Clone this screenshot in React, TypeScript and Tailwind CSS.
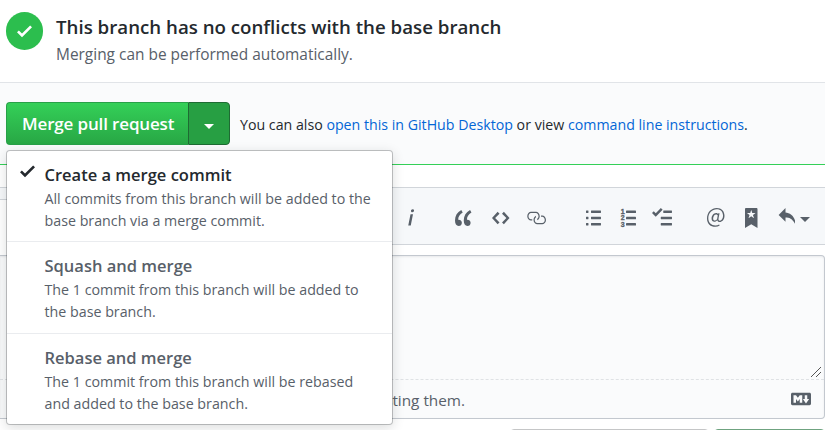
import React from "react";

const paths = {
  check: "M12 5l-8 8-4-4 1.5-1.5L4 10l6.5-6.5L12 5z",
  italic:
    "M2.81 5h1.98L3 14H1l1.81-9zm.36-2.7c0-.7.58-1.3 1.33-1.3.56 0 1.13.38 1.13 1.03 0 .75-.59 1.3-1.33 1.3-.58 0-1.13-.38-1.13-1.03z",
  quote:
    "M6.16 3.5C3.73 5.06 2.55 6.67 2.55 9.36c.16-.05.3-.05.44-.05 1.27 0 2.5.86 2.5 2.41 0 1.61-1.03 2.61-2.5 2.61-1.9 0-2.99-1.52-2.99-4.25 0-3.8 1.75-6.53 5.02-8.42L6.16 3.5zm7 0c-2.43 1.56-3.61 3.17-3.61 5.86.16-.05.3-.05.44-.05 1.27 0 2.5.86 2.5 2.41 0 1.61-1.03 2.61-2.5 2.61-1.89 0-2.98-1.52-2.98-4.25 0-3.8 1.75-6.53 5.02-8.42l1.14 1.84h-.01z",
  code: "M9.5 3L8 4.5 11.5 8 8 11.5 9.5 13 14 8 9.5 3zm-5 0L0 8l4.5 5L6 11.5 2.5 8 6 4.5 4.5 3z",
  link: "M4 9h1v1H4c-1.5 0-3-1.69-3-3.5S2.55 3 4 3h4c1.45 0 3 1.69 3 3.5 0 1.41-.91 2.72-2 3.25V8.59c.58-.45 1-1.27 1-2.09C10 5.22 8.98 4 8 4H4c-.98 0-2 1.22-2 2.5S3 9 4 9zm9-3h-1v1h1c1 0 2 1.22 2 2.5S13.98 12 13 12H9c-.98 0-2-1.22-2-2.5 0-.83.42-1.64 1-2.09V6.25c-1.09.53-2 1.84-2 3.25C6 11.31 7.55 13 9 13h4c1.45 0 3-1.69 3-3.5S14.5 6 13 6z",
  list: "M2 13c0 .59 0 1-.59 1H.59C0 14 0 13.59 0 13c0-.59 0-1 .59-1h.81c.59 0 .59.41.59 1H2zm2.59-9h6.81c.59 0 .59-.41.59-1 0-.59 0-1-.59-1H4.59C4 2 4 2.41 4 3c0 .59 0 1 .59 1zM1.41 7H.59C0 7 0 7.41 0 8c0 .59 0 1 .59 1h.81c.59 0 .59-.41.59-1 0-.59 0-1-.59-1h.01zm0-5H.59C0 2 0 2.41 0 3c0 .59 0 1 .59 1h.81c.59 0 .59-.41.59-1 0-.59 0-1-.59-1h.01zm10 5H4.59C4 7 4 7.41 4 8c0 .59 0 1 .59 1h6.81c.59 0 .59-.41.59-1 0-.59 0-1-.59-1h.01zm0 5H4.59C4 12 4 12.41 4 13c0 .59 0 1 .59 1h6.81c.59 0 .59-.41.59-1 0-.59 0-1-.59-1h.01z",
  tasks:
    "M15.41 9H7.59C7 9 7 8.59 7 8c0-.59 0-1 .59-1h7.81c.59 0 .59.41.59 1 0 .59 0 1-.59 1h.01zM9.59 4C9 4 9 3.59 9 3c0-.59 0-1 .59-1h5.81c.59 0 .59.41.59 1 0 .59 0 1-.59 1H9.59zM0 3.91l1.41-1.3L3 4.2 7.09 0 8.5 1.41 3 6.91l-3-3zM7.59 12h7.81c.59 0 .59.41.59 1 0 .59 0 1-.59 1H7.59C7 14 7 13.59 7 13c0-.59 0-1 .59-1z",
  mention:
    "M6.58 15c1.25 0 2.52-.31 3.56-.94l-.42-.94c-.84.52-1.89.83-3.03.83-3.23 0-5.64-2.08-5.64-5.72 0-4.37 3.23-7.18 6.58-7.18 3.45 0 5.22 2.19 5.22 5.2 0 2.39-1.34 3.86-2.5 3.86-1.05 0-1.36-.73-1.05-2.19l.73-3.75H8.98l-.11.72c-.41-.63-.94-.83-1.56-.83-2.19 0-3.66 2.39-3.66 4.38 0 1.67.94 2.61 2.3 2.61.84 0 1.67-.53 2.3-1.25.11.94.94 1.45 1.98 1.45 1.67 0 3.77-1.67 3.77-5C14 2.61 11.59 0 7.83 0 3.66 0 0 3.33 0 8.33 0 12.71 2.92 15 6.58 15zm-.31-5c-.73 0-1.36-.52-1.36-1.67 0-1.45.94-3.22 2.41-3.22.52 0 .84.2 1.25.83l-.52 3.02c-.63.73-1.25 1.05-1.78 1.05V10z",
  bookmark:
    "M9 0H1C.27 0 0 .27 0 1v15l5-3.09L10 16V1c0-.73-.27-1-1-1zm-.78 4.25L6.36 5.61l.72 2.16c.06.22-.02.28-.2.17L5 6.6 3.12 7.94c-.19.11-.25.05-.2-.17l.72-2.16-1.86-1.36c-.17-.16-.14-.23.09-.23l2.3-.03.7-2.16h.25l.7 2.16 2.3.03c.23 0 .27.08.09.23h.01z",
  reply: "M6 3.5c3.92.44 8 3.125 8 10-2.312-5.062-4.75-6-8-6V11L.5 5.5 6 0v3.5z",
  markdown:
    "M14.85 3H1.15C.52 3 0 3.52 0 4.15v7.69C0 12.48.52 13 1.15 13h13.69c.64 0 1.15-.52 1.15-1.15v-7.7C16 3.52 15.48 3 14.85 3zM9 11H7V8L5.5 9.92 4 8v3H2V5h2l1.5 2L7 5h2v6zm2.99.5L9.5 8H11V5h2v3h1.5l-2.51 3.5z",
};

function Icon({ name, w, className = "" }: { name: keyof typeof paths; w: number; className?: string }) {
  return (
    <svg
      viewBox={`0 0 ${w} 16`}
      width={w * 1.25}
      height={20}
      fill="currentColor"
      className={`shrink-0 ${className}`}
    >
      <path d={paths[name]} />
    </svg>
  );
}

function OrderedListIcon({ className = "" }: { className?: string }) {
  return (
    <svg viewBox="0 0 12 16" width={15} height={20} fill="currentColor" className={`shrink-0 overflow-visible ${className}`}>
      <rect x="4" y="2" width="8" height="2" rx=".5" />
      <rect x="4" y="7" width="8" height="2" rx=".5" />
      <rect x="4" y="12" width="8" height="2" rx=".5" />
      <g fontFamily="Liberation Sans, sans-serif" fontSize="5.6" fontWeight="700" stroke="currentColor" strokeWidth=".25">
        <text x="-.3" y="4.9">1</text>
        <text x="-.3" y="9.9">2</text>
        <text x="-.3" y="14.9">3</text>
      </g>
    </svg>
  );
}

function MenuItem({ title, lines, selected, className }: {
  title: string;
  lines: string[];
  selected?: boolean;
  className: string;
}) {
  return (
    <div className={`flex border-b border-[#eaecef] pt-[11px] last:border-b-0 ${className}`}>
      <div className="w-[37.5px] shrink-0 pl-[13px]">
        {selected && <Icon name="check" w={12} className="-mt-px text-[#24292e]" />}
      </div>
      <div className="whitespace-nowrap">
        <div className={`h-[26px] text-[16.5px] leading-[26px] font-semibold ${selected ? "text-[#24292e]" : "text-[#586069]"}`}>
          {title}
        </div>
        {lines.map((l) => (
          <div key={l} className="h-[22px] text-[14.25px] leading-[22px] text-[#586069]">
            {l}
          </div>
        ))}
      </div>
    </div>
  );
}

export default function App() {
  return (
    <div className="relative flex h-[430px] w-[825px] flex-col overflow-hidden bg-white font-['Open_Sans','Noto_Sans',sans-serif] text-[#24292e]">
      <div className="flex h-[83px] shrink-0 border-b border-[#e1e4e8] pt-3 pl-1.5">
        <div className="flex h-[38px] w-[37px] items-center justify-center rounded-full bg-[#2cbe4e] text-white">
          <Icon name="check" w={12} />
        </div>
        <div className="ml-[13px] whitespace-nowrap">
          <div className="h-[30px] text-[18.7px] leading-[30px] font-semibold">
            This branch has no conflicts with the base branch
          </div>
          <div className="h-[26px] text-[15.45px] leading-[25px] text-[#586069]">
            Merging can be performed automatically.
          </div>
        </div>
      </div>

      <div className="flex h-[82px] shrink-0 border-b border-[#34d058] bg-[#fafbfc] pt-[19px] pl-1.5">
        <div className="flex h-[43px] w-[224px] shrink-0 text-white">
          <button className="flex w-[182px] items-center rounded-l-[4px] border border-r-0 border-[#28a048] bg-linear-to-b from-[#34d058] to-[#28a745] pt-px pl-[15px] text-[17px] font-semibold tracking-[-0.15px] whitespace-nowrap">
            Merge pull request
          </button>
          <button className="flex w-[42px] items-center justify-center rounded-r-[4px] border border-[#1e6b33] bg-[#279f43]">
            <span className="mt-[5px] border-x-[5px] border-t-[5px] border-x-transparent border-t-white" />
          </button>
        </div>
        <p className="ml-[10px] h-[43px] text-[14.2px] leading-[45px] whitespace-nowrap">
          You can also <a className="text-[#0366d6]">open this in GitHub Desktop</a> or view{" "}
          <a className="text-[#0366d6]">command line instructions</a>.
        </p>
      </div>

      <div className="mt-[22px] flex h-[58px] shrink-0 border-y border-[#d1d5da] bg-[#f6f8fa] text-[#586069]">
        <div className="mt-[11px] mr-[400px] h-[46px] w-[7px] shrink-0 border-t border-[#d1d5da] bg-white" />
        <div className="mt-[20px] flex h-[20px]">
          <Icon name="italic" w={6} />
          <Icon name="quote" w={14} className="ml-[40px]" />
          <Icon name="code" w={14} className="ml-[20px]" />
          <Icon name="link" w={16} className="ml-[16.5px]" />
          <Icon name="list" w={12} className="ml-[39.5px]" />
          <OrderedListIcon className="ml-[20px]" />
          <Icon name="tasks" w={16} className="ml-[16.5px]" />
          <Icon name="mention" w={14} className="ml-[35px]" />
          <Icon name="bookmark" w={10} className="ml-[20.5px]" />
          <Icon name="reply" w={14} className="ml-[20px]" />
          <span className="mt-[9px] ml-[5px] h-0 border-x-[5px] border-t-[5px] border-x-transparent border-t-[#586069]" />
        </div>
      </div>

      <div className="mt-[10px] flex h-[164px] shrink-0 flex-col rounded-r-[4px] border border-l-0 border-[#c3c8cf] bg-[#fafbfc] shadow-[inset_0_1px_2px_rgba(27,31,35,0.075)]">
        <div className="flex h-[124px] items-end justify-end border-b border-dashed border-[#dfe2e5] pr-[3px] pb-[2px]">
          <svg width="10" height="10" viewBox="0 0 10 10" stroke="#555" strokeWidth="1">
            <path d="M0 10L10 0M5 10L10 5" />
          </svg>
        </div>
        <div className="flex h-[38px] items-center justify-between pr-[13px] pl-[298px] text-[#586069]">
          <span className="w-[167px] pt-[2px] text-right text-[15.3px] whitespace-nowrap">or pasting them.</span>
          <Icon name="markdown" w={16} />
        </div>
      </div>

      <div className="mt-[10px] flex shrink-0 pl-[510px]">
        <div className="h-5 w-[199px] shrink-0 rounded-[4px] border border-[#c5c6c7] bg-[#eff3f6]" />
        <div className="ml-[5px] h-5 w-[111px] shrink-0 rounded-[4px] border border-[#6fa380] bg-[#94d3a2]" />
      </div>

      <div className="absolute top-[150px] left-[6px] h-[275px] w-[387px] rounded-[4px] border border-[#1b1f23]/25 bg-white bg-clip-padding shadow-[0_3px_12px_rgba(27,31,35,0.15)]">
        <MenuItem
          selected
          className="h-[91px]"
          title="Create a merge commit"
          lines={["All commits from this branch will be added to the", "base branch via a merge commit."]}
        />
        <MenuItem
          className="h-[92px]"
          title="Squash and merge"
          lines={["The 1 commit from this branch will be added to", "the base branch."]}
        />
        <MenuItem
          className="h-[90px]"
          title="Rebase and merge"
          lines={["The 1 commit from this branch will be rebased", "and added to the base branch."]}
        />
      </div>
    </div>
  );
}
